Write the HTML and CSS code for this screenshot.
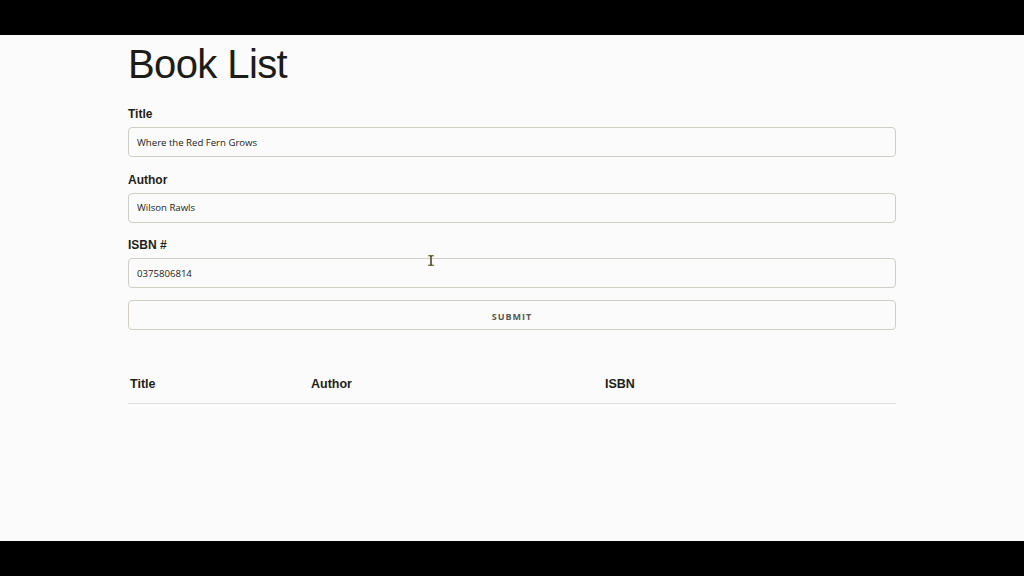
FILE: index.html
```html
<!DOCTYPE html>
<html lang="en">
<head>
<meta charset="utf-8">
<title>Book List</title>
<link rel="stylesheet" href="styles.css">
</head>
<body>
<div class="bar"></div>
<main class="page">
  <div class="container">
    <h1 class="title">Book List</h1>
    <form class="book-form">
      <div class="field">
        <label class="label" for="title">Title</label>
        <input class="input" id="title" type="text" value="Where the Red Fern Grows">
      </div>
      <div class="field">
        <label class="label" for="author">Author</label>
        <input class="input" id="author" type="text" value="Wilson Rawls">
      </div>
      <div class="field">
        <label class="label" for="isbn">ISBN #</label>
        <input class="input" id="isbn" type="text" value="0375806814">
      </div>
      <button class="submit" type="button">Submit</button>
    </form>
    <div class="table">
      <div class="th">Title</div>
      <div class="th">Author</div>
      <div class="th">ISBN</div>
    </div>
  </div>
  <svg class="cursor" width="8" height="13" viewBox="0 0 8 13" aria-hidden="true">
    <path d="M1 1h6v1.5H5V10.5h2V12H1v-1.5h2V2.5H1z" fill="#3a3a2a" stroke="#e8e8c8" stroke-width="0.6"/>
  </svg>
</main>
<div class="bar"></div>
</body>
</html>
```
FILE: styles.css
```css
* { box-sizing: border-box; }
html, body { margin: 0; padding: 0; }
body {
  width: 1024px;
  height: 576px;
  display: flex;
  flex-direction: column;
  background: #000;
  font-family: "Liberation Sans", Arial, sans-serif;
  color: #1e1e1e;
  overflow: hidden;
}
.bar { height: 35px; background: #000; flex: none; }
.page {
  position: relative;
  height: 506px;
  background: #fcfbfb;
}
.container {
  width: 768px;
  margin: 0 auto;
  padding-top: 6px;
}
.title {
  margin: 0;
  font-size: 40px;
  line-height: 46px;
  font-weight: 400;
  letter-spacing: -0.6px;
  color: #1c1c18;
}
.book-form {
  margin-top: 20px;
  display: flex;
  flex-direction: column;
}
.field {
  display: flex;
  flex-direction: column;
  margin-bottom: 15.5px;
}
.field:last-of-type { margin-bottom: 12px; }
.label {
  font-size: 12px;
  line-height: 15px;
  font-weight: 700;
  margin-bottom: 5px;
  color: #1e1e1a;
}
.input {
  height: 30px;
  border: 1px solid #cfcfc8;
  border-radius: 4px;
  background: transparent;
  padding: 0 8px;
  font-family: "Open Sans", sans-serif;
  font-size: 9.6px;
  color: #222;
  outline: none;
}
.submit {
  height: 30px;
  padding: 2px 0 0;
  border: 1px solid #cfcfc8;
  border-radius: 4px;
  background: transparent;
  font-family: "Open Sans", sans-serif;
  font-size: 9px;
  font-weight: 700;
  letter-spacing: 1px;
  text-transform: uppercase;
  color: #555550;
}
.table {
  margin-top: 35px;
  display: grid;
  grid-template-columns: 181px 294px 1fr;
  border-bottom: 1px solid #e0dfe4;
}
.th {
  padding: 12px 2px 11px 2px;
  font-size: 12.5px;
  line-height: 15px;
  font-weight: 700;
  color: #1e1e1a;
}
.cursor {
  position: absolute;
  left: 427px;
  top: 219px;
}
```
